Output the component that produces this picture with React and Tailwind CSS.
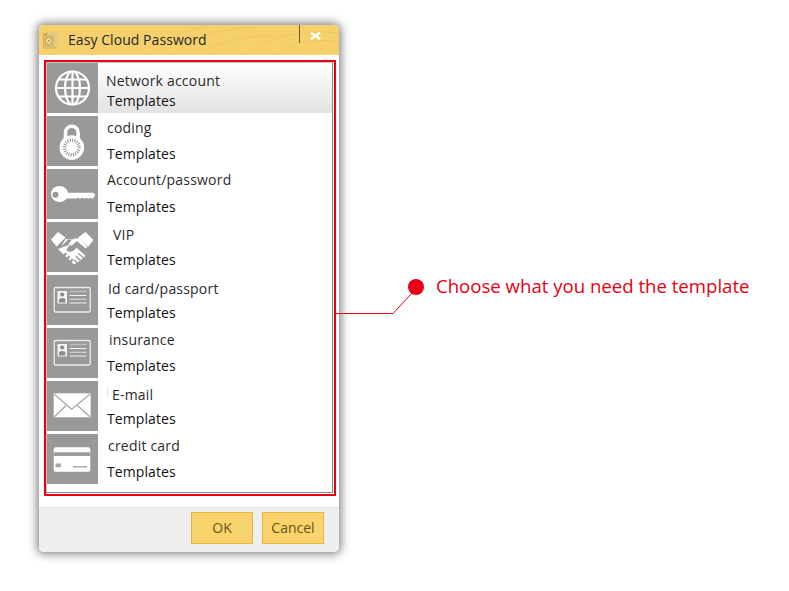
import React from "react";

const Globe = () => (
  <svg width="51" height="50" viewBox="0 0 51 50" fill="none" stroke="#fff" strokeWidth="2.2">
    <circle cx="25.5" cy="25" r="16.5" />
    <ellipse cx="25.5" cy="25" rx="7.5" ry="16.5" />
    <path d="M25.5 8.5v33M9 25h33M11.5 16.5h28M11.5 33.5h28" />
  </svg>
);

const Lock = () => (
  <svg width="51" height="50" viewBox="0 0 51 50" fill="none">
    <path d="M18.5 24v-7.500a6.300 6.300 0 0 1 12.600 0V24" stroke="#fff" strokeWidth="3.600" />
    <circle cx="24.800" cy="31.500" r="12.300" fill="#fff" />
    <circle cx="24.800" cy="31.500" r="7.300" stroke="#999" strokeWidth="3.400" strokeDasharray="1.100 1.200" />
    <circle cx="24.800" cy="31.500" r="3.200" fill="#fff" />
  </svg>
);

const Key = () => (
  <svg width="51" height="50" viewBox="0 0 51 50">
    <ellipse cx="12.500" cy="25" rx="8.500" ry="8" fill="#fff" />
    <path fill="#fff" d="M18 23.800h28l2.400 2-2.400 3.700h-1.400l-1.100-1.100-1.200 1.100h-1.500l-1.100-1.100-1.200 1.100h-2l-1.100-1.100-1.200 1.100h-2l-1.500-1.100-1.200 1.100H18z" />
    <circle cx="8.500" cy="25.700" r="3" fill="#999" />
  </svg>
);

const Shake = () => (
  <svg width="51" height="50" viewBox="0 0 51 50" fill="#fff">
    <path d="M4 17.500 11 10l7.500 5.500L9.500 24.500zM46.500 18 38.500 10 31 15.500l10 9.500z" />
    <path d="M18.500 17l7 .5 3-1.300 4.500.5 7.200 8.300-1.500 1.500-9-7.500-3.500 3.500c-1.800 1.500-4 1.200-4.800-.2l4-5.200-3.700-.3-7.300 7.700z" />
    <path d="M11 27l5.500 5.500 2-2 1.600 1.600-1.800 1.900 1.500 1.500 2-2 1.500 1.500-2 2 1.700 1.600 2-2 1.500 1.500-2 2 2.500 2.400 2.200-1.600-2.900-2.800.9-.9 3.600 3.300 1.800-1.800-4.300-4 .9-.9 4.700 4.200 1.800-1.900-5-4.500.9-.9 5.300 4.800 1.500-2-8.900-7.700-2.800 2.800c-2.800 2-6 1.400-7.400-.9l3.300-4.400h-1.500z" />
  </svg>
);

const IdCard = () => (
  <svg width="51" height="50" viewBox="0 0 51 50" fill="none">
    <rect x="7.200" y="12.500" width="36" height="24.500" rx="1.500" stroke="#ececec" strokeWidth="1.300" />
    <rect x="10.500" y="16" width="9.500" height="12.500" fill="#f2f2f2" />
    <circle cx="15.200" cy="19.500" r="2.100" fill="#8c8c8c" />
    <path d="M12 27.500v-2.500c0-1.300 1.400-2 3.200-2s3.200.7 3.200 2v2.500z" fill="#8c8c8c" />
    <path d="M22.700 16.500h16.800" stroke="#bdbdbd" strokeWidth="1.500" />
    <path d="M22.700 20.500h16.800M22.700 28h16.800" stroke="#f2f2f2" strokeWidth="1.100" />
    <path d="M22.700 24.300h16.800" stroke="#d5d5d5" strokeWidth="1.200" />
  </svg>
);

const Mail = () => (
  <svg width="51" height="50" viewBox="0 0 51 50">
    <rect x="6.700" y="12.300" width="37" height="24" fill="#fff" />
    <path d="M7.200 13 24.500 28.300 43.200 13M7.200 36 19 24.500M43.200 36 30.500 24.500" fill="none" stroke="#a6a6a6" strokeWidth="1.200" />
  </svg>
);

const Card = () => (
  <svg width="51" height="50" viewBox="0 0 51 50">
    <rect x="6.700" y="13.300" width="36.600" height="24.400" rx="2" fill="#fff" />
    <rect x="6.700" y="18.300" width="36.600" height="3.600" fill="#999" />
    <rect x="8.500" y="29.500" width="5.500" height="3.800" fill="#aaa" />
    <rect x="26" y="32" width="14" height="1.500" fill="#aaa" />
  </svg>
);

const VaultIcon = () => (
  <svg width="20" height="20" viewBox="0 0 20 20">
    <path d="M1 4 5 2h11v15l-4 1.500H1z" fill="#c9a95a" />
    <path d="M5 2h11v15H12V5L5 5z" fill="#e6cc83" />
    <rect x="1.500" y="5" width="10.500" height="13" fill="#d9bb6c" />
    <circle cx="6.700" cy="11" r="3.200" fill="#f0e2ad" stroke="#b5954a" strokeWidth="0.800" />
    <circle cx="6.700" cy="11" r="1.100" fill="#b5954a" />
  </svg>
);

const rows = [
  { icon: <Globe />, name: "Network account", pad: "pl-[8px] pt-[8px]", active: true },
  { icon: <Lock />, name: "coding", pad: "pl-[9px] pt-[2px]" },
  { icon: <Key />, name: "Account/password", pad: "pl-[9px] pt-[1px]" },
  { icon: <Shake />, name: "VIP", pad: "pl-[15px] pt-[3px]" },
  { icon: <IdCard />, name: "Id card/passport", pad: "pl-[10px] pt-[4px]" },
  { icon: <IdCard />, name: "insurance", pad: "pl-[11px] pt-[2px]" },
  { icon: <Mail />, name: "E-mail", pad: "pl-[14px] pt-[4px]", tick: true },
  { icon: <Card />, name: "credit card", pad: "pl-[10px] pt-[2px]" },
];

const font = { fontFamily: '"Open Sans", "Noto Sans", sans-serif' };

export default function App() {
  return (
    <div className="relative w-[789px] h-[591px] bg-white overflow-hidden" style={font}>
      <div className="absolute left-[39px] top-[25px] w-[300px] h-[527px] flex flex-col rounded-[5px] bg-white shadow-[0_0_10px_2px_rgba(0,0,0,0.5)] overflow-hidden">
        <div className="relative h-[30px] flex items-center pl-[3px] bg-[#f6d06c]">
          <svg className="absolute inset-0" width="300" height="30" fill="none" stroke="#f2c75c" strokeWidth="1">
            <path d="M110 30C130 5 170 0 200 -5M135 30C150 12 180 5 215 2M160 30C175 18 200 12 235 10M205 30C230 10 270 5 300 8M235 30C250 18 275 14 300 16" />
          </svg>
          <div className="relative h-[20px]"><VaultIcon /></div>
          <span className="relative ml-[6px] text-[14px] leading-5 text-[#1b2a28] tracking-[0.06px]">Easy Cloud Password</span>
          <div className="absolute left-[260px] top-0 w-px h-[18px] bg-[#6b5a2a]" />
          <svg className="absolute left-[271px] top-[6px]" width="11" height="10" viewBox="0 0 11 10" stroke="#fff" strokeWidth="2.200">
            <path d="M1 1.500 10 8M10 1.500 1 8" />
          </svg>
        </div>

        <div className="h-[452px] pl-[5px] pr-[3px] pt-[5px]">
          <div className="h-[436px] border-2 border-[#e60012] pr-px pb-px">
            <div className="h-[431px] border border-t-[#c4c4c4] border-l-[#c4c4c4] border-r-[#8c8c8c] border-b-[#8c8c8c] flex flex-col gap-[3px]">
              {rows.map((r) => (
                <div
                  key={r.name}
                  className={r.active
                    ? "h-[50px] shrink-0 flex bg-gradient-to-b from-white to-[#e3e3e3]"
                    : "h-[50px] shrink-0 flex"}
                >
                  <div className="w-[51px] h-[50px] shrink-0 bg-[#999999]">{r.icon}</div>
                  <div className="relative flex-1 flex flex-col">
                    {r.tick && <div className="absolute left-[9px] top-[7px] w-px h-[8px] bg-[#f3dca8]" />}
                    <div className={"h-[28px] text-[14px] leading-5 tracking-[0.2px] text-[#2b2b2b] " + r.pad}>{r.name}</div>
                    <div className="h-[20px] pl-[9px] text-[14px] leading-5 tracking-[0.08px] text-[#111111]">Templates</div>
                  </div>
                </div>
              ))}
            </div>
          </div>
        </div>

        <div className="flex-1 flex justify-end items-start gap-[9px] pt-[4px] pr-[15px] bg-[#efefef] border-t border-[#e2e2e2]">
          <button className="w-[62px] h-[32px] bg-[#f8d36e] border border-[#e5b53c] text-[14px] leading-[28px] text-[#6a5315]">OK</button>
          <button className="w-[62px] h-[32px] bg-[#f8d36e] border border-[#e5b53c] text-[14px] leading-[28px] text-[#6a5315]">Cancel</button>
        </div>
      </div>

      <svg className="absolute left-[335px] top-[280px]" width="90" height="40" fill="none" stroke="#e60012" strokeWidth="1">
        <path d="M0 33.500H58L78 12" />
      </svg>
      <div className="absolute left-[408px] top-[279px] w-[16px] h-[16px] rounded-full bg-[#e60012]" />
      <div className="absolute left-[436px] top-[273px] text-[18.600px] leading-[26px] whitespace-nowrap text-[#e60012]">Choose what you need the template</div>
    </div>
  );
}
